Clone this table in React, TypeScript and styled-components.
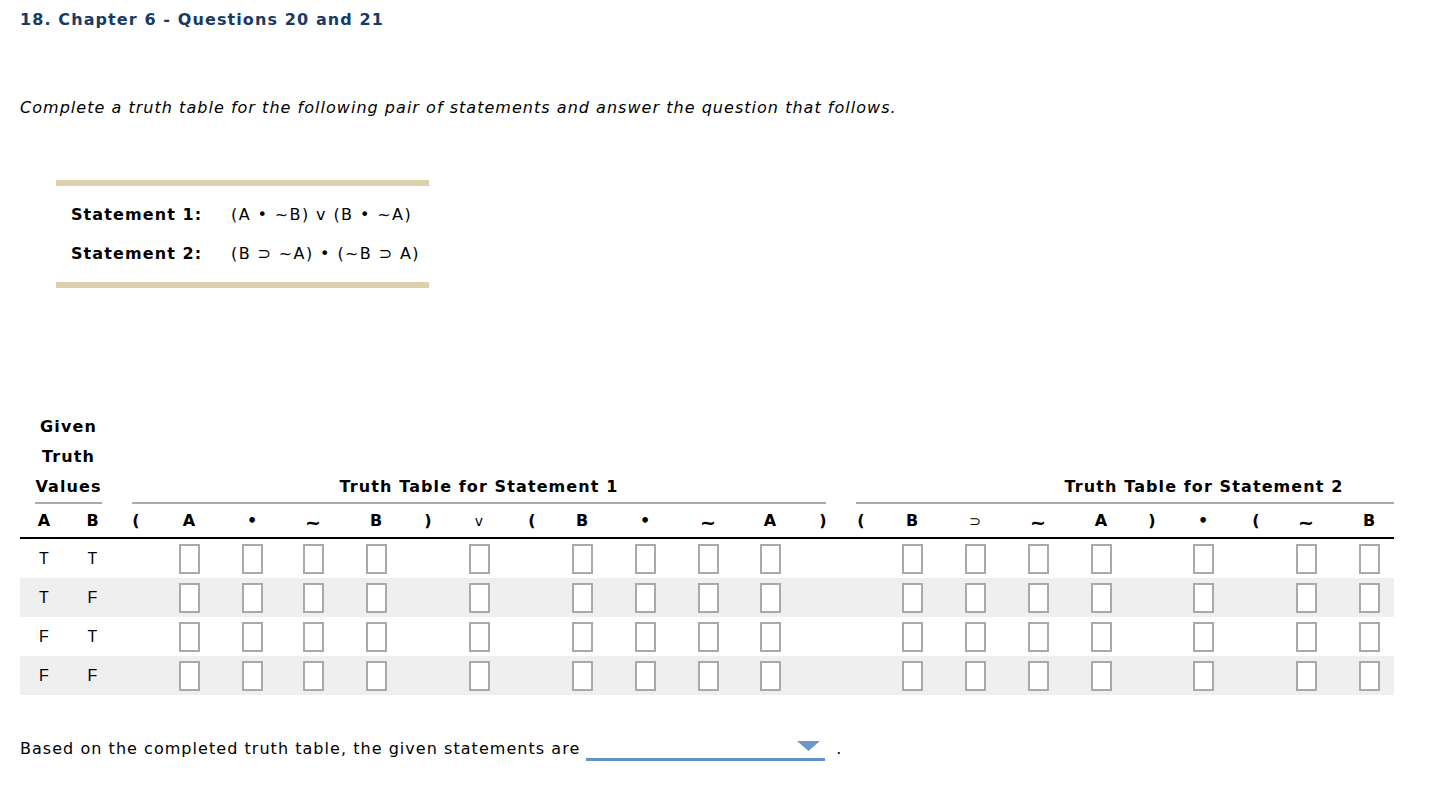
import React from "react";
import styled, { createGlobalStyle } from "styled-components";

const GlobalStyle = createGlobalStyle`
  html, body { margin: 0; padding: 0; background: #fff; }
  body { font-family: "DejaVu Sans", Verdana, sans-serif; color: #000; }
`;

const COLS = [48, 49, 38, 68, 58, 64, 62, 42, 60, 46, 54, 72, 54, 70, 36, 40, 62, 64, 62, 64, 38, 64, 42, 58, 68, 64, 60, 40];
const TEMPLATE = COLS.map((c) => `${c}px`).join(" ");
const TOTAL = COLS.reduce((a, b) => a + b, 0);

type Col = { sym: string; box: boolean; kind?: "sym" | "light" };

const S1: Col[] = [
  { sym: "(", box: false },
  { sym: "A", box: true },
  { sym: "•", box: true },
  { sym: "~", box: true },
  { sym: "B", box: true },
  { sym: ")", box: false },
  { sym: "v", box: true, kind: "light" },
  { sym: "(", box: false },
  { sym: "B", box: true },
  { sym: "•", box: true },
  { sym: "~", box: true },
  { sym: "A", box: true },
  { sym: ")", box: false },
];

/* Statement 2 runs past the visible edge of the table; the last three
   columns (⊃ A ) ) are scrolled out of view, so they hold no text here. */
const S2: Col[] = [
  { sym: "(", box: false },
  { sym: "B", box: true },
  { sym: "⊃", box: true, kind: "light" },
  { sym: "~", box: true },
  { sym: "A", box: true },
  { sym: ")", box: false },
  { sym: "•", box: true },
  { sym: "(", box: false },
  { sym: "~", box: true },
  { sym: "B", box: true },
  { sym: "", box: false },
  { sym: "", box: false },
  { sym: "", box: false },
];

const ROWS = [
  ["T", "T"],
  ["T", "F"],
  ["F", "T"],
  ["F", "F"],
];

const Page = styled.div`
  padding: 8px 0 0 20px;
  font-size: 16px;
  letter-spacing: 1.1px;
`;

const Title = styled.h1`
  margin: 0;
  font-size: 16px;
  line-height: 24px;
  font-weight: bold;
  color: #183a64;
`;

const Instruction = styled.p`
  margin: 64px 0 0;
  font-size: 16px;
  line-height: 24px;
  font-style: italic;
  letter-spacing: 1.03px;
`;

const StatementBox = styled.div`
  margin: 60px 0 0 36px;
  width: 373px;
  border-top: 6px solid #dbd1ac;
  border-bottom: 6px solid #dbd1ac;
  padding: 17px 0 16px 15px;
  box-sizing: border-box;
  display: flex;
  flex-direction: column;
  gap: 15px;
`;

const StatementRow = styled.div`
  display: grid;
  grid-template-columns: 160px auto;
  line-height: 24px;
  font-size: 16px;
`;

const StatementLabel = styled.span`
  font-weight: bold;
`;

const Formula = styled.span`
  letter-spacing: 1.4px;
`;

const TableClip = styled.div`
  margin-top: 124px;
  width: 1374px;
  overflow: hidden;
`;

const Table = styled.div`
  width: ${TOTAL}px;
`;

const GridRow = styled.div<{ $shade?: boolean }>`
  display: grid;
  grid-template-columns: ${TEMPLATE};
  background: ${(p) => (p.$shade ? "#efefef" : "transparent")};
`;

const GroupCell = styled.div<{ $span: number }>`
  grid-column: span ${(p) => p.$span};
  align-self: end;
  margin: 0 15px;
  border-bottom: 2px solid #ababab;
  text-align: center;
  font-weight: bold;
  font-size: 16px;
  line-height: 30px;
`;

const SymbolRow = styled(GridRow)`
  height: 33px;
  align-items: center;
  border-bottom: 2px solid #000;
`;

const SymbolCell = styled.div<{ $light?: boolean }>`
  text-align: center;
  letter-spacing: 0;
  font-weight: ${(p) => (p.$light ? "normal" : "bold")};
  font-size: ${(p) => (p.$light ? "14px" : "16px")};
  line-height: 20px;
`;

const Tilde = styled.span`
  display: inline-block;
  font-size: 19px;
  transform: translateY(2px);
`;

const DataRow = styled(GridRow)`
  height: 39px;
  align-items: center;
`;

const ValueCell = styled.div`
  text-align: center;
  font-size: 16px;
  letter-spacing: 0;
  font-family: "Liberation Sans", Arial, sans-serif;
`;

const BoxCell = styled.div`
  display: flex;
  justify-content: center;
`;

const AnswerBox = styled.div`
  width: 21px;
  height: 30px;
  box-sizing: border-box;
  border: 2px solid #a9a9a9;
  background: #fff;
`;

const Bottom = styled.div`
  margin-top: 39px;
  display: flex;
  align-items: flex-end;
  font-size: 16px;
  line-height: 24px;
  letter-spacing: 1.04px;
`;

const Dropdown = styled.div`
  position: relative;
  margin-left: 6px;
  width: 239px;
  height: 24px;
  border-bottom: 3px solid #6393c2;
  box-sizing: content-box;
`;

const Caret = styled.svg`
  position: absolute;
  right: 5px;
  top: 7px;
`;

const Period = styled.span`
  margin-left: 11px;
`;

function renderSymbols(cols: Col[]) {
  return cols.map((c, i) => (
    <SymbolCell key={i} $light={c.kind === "light"}>
      {c.sym === "~" ? <Tilde>~</Tilde> : c.sym}
    </SymbolCell>
  ));
}

function renderBoxes(cols: Col[]) {
  return cols.map((c, i) => (
    <BoxCell key={i}>{c.box ? <AnswerBox /> : null}</BoxCell>
  ));
}

export default function App() {
  return (
    <Page>
      <GlobalStyle />
      <Title>18. Chapter 6 - Questions 20 and 21</Title>
      <Instruction>
        Complete a truth table for the following pair of statements and answer the question that follows.
      </Instruction>
      <StatementBox>
        <StatementRow>
          <StatementLabel>Statement 1:</StatementLabel>
          <Formula>(A • ~B) v (B • ~A)</Formula>
        </StatementRow>
        <StatementRow>
          <StatementLabel>Statement 2:</StatementLabel>
          <Formula>(B ⊃ ~A) • (~B ⊃ A)</Formula>
        </StatementRow>
      </StatementBox>
      <TableClip>
        <Table>
          <GridRow>
            <GroupCell $span={2}>
              Given
              <br />
              Truth
              <br />
              Values
            </GroupCell>
            <GroupCell $span={13}>Truth Table for Statement 1</GroupCell>
            <GroupCell $span={13}>Truth Table for Statement 2</GroupCell>
          </GridRow>
          <SymbolRow>
            <SymbolCell>A</SymbolCell>
            <SymbolCell>B</SymbolCell>
            {renderSymbols(S1)}
            {renderSymbols(S2)}
          </SymbolRow>
          {ROWS.map((r, i) => (
            <DataRow key={i} $shade={i % 2 === 1}>
              <ValueCell>{r[0]}</ValueCell>
              <ValueCell>{r[1]}</ValueCell>
              {renderBoxes(S1)}
              {renderBoxes(S2)}
            </DataRow>
          ))}
        </Table>
      </TableClip>
      <Bottom>
        <span>Based on the completed truth table, the given statements are</span>
        <Dropdown>
          <Caret width="23" height="10" viewBox="0 0 23 10">
            <polygon points="0,0 23,0 11.5,10" fill="#6b98c6" />
          </Caret>
        </Dropdown>
        <Period>.</Period>
      </Bottom>
    </Page>
  );
}
